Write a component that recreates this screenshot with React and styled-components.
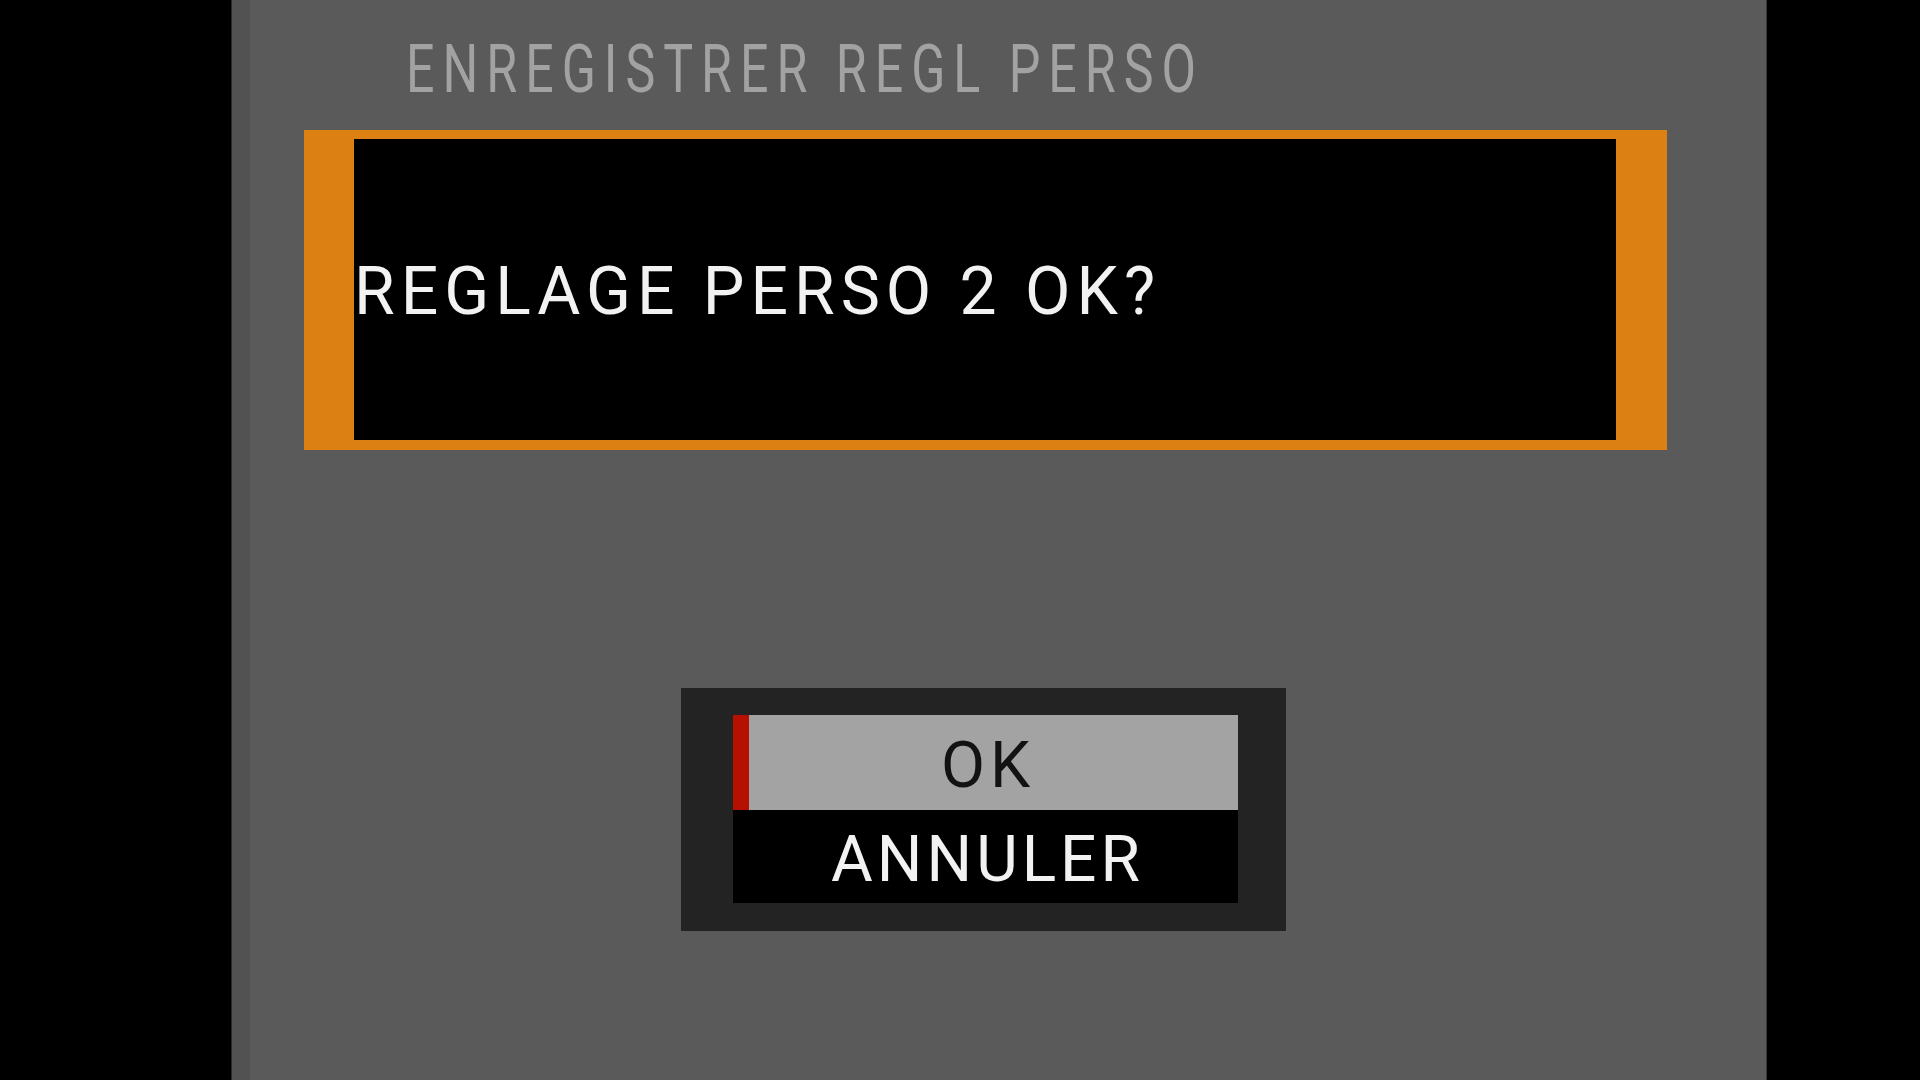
import React from "react";
import styled, { createGlobalStyle } from "styled-components";

const Global = createGlobalStyle`
  html, body { margin: 0; padding: 0; background: #000; }
  body { font-family: Roboto, "Liberation Sans", sans-serif; }
  #root { height: 100vh; }
`;

const Screen = styled.div`
  display: flex;
  width: 1920px;
  height: 1080px;
  background: #000;
  overflow: hidden;
`;

const Panel = styled.section`
  margin-left: 232px;
  width: 1516px;
  height: 100%;
  background: #5a5a5a;
  border-left: 18px solid #525252;
  display: flex;
  flex-direction: column;
  box-shadow: -1px 0 0 #2a2a2a, 1px 0 0 #3a3a3a;
`;

const Title = styled.h1`
  margin: 37px 0 0 156px;
  font-family: Roboto, "Liberation Sans", sans-serif;
  font-weight: 400;
  font-size: 66px;
  line-height: 66px;
  letter-spacing: 10.5px;
  color: #a2a2a2;
  white-space: nowrap;
  transform: scaleX(0.76);
  transform-origin: left center;
`;

const MessageFrame = styled.div`
  margin: 27px 0 0 54px;
  width: 1262px;
  height: 301px;
  border-style: solid;
  border-color: #dd8014;
  border-width: 9px 51px 10px 50px;
  background: #000;
  display: flex;
  align-items: center;
`;

const Message = styled.p`
  margin: 0;
  padding-top: 5px;
  font-size: 66px;
  line-height: 66px;
  letter-spacing: 6px;
  color: #f2f2f2;
  white-space: nowrap;
`;

const Menu = styled.div`
  margin: 238px 0 0 431px;
  width: 505px;
  padding: 27px 48px 28px 52px;
  background: #232323;
  display: flex;
  flex-direction: column;
`;

const Option = styled.div`
  position: relative;
  height: ${(p) => p.$h}px;
  box-sizing: border-box;
  padding-top: 7px;
  display: flex;
  align-items: center;
  justify-content: center;
  background: ${(p) => (p.$selected ? "#a3a3a3" : "#000")};
  color: ${(p) => (p.$selected ? "#121212" : "#f2f2f2")};
  font-size: 64px;
  line-height: 64px;
  letter-spacing: ${(p) => p.$spacing}px;
  padding-left: ${(p) => p.$spacing}px;
`;

const Cursor = styled.span`
  position: absolute;
  left: 0;
  top: 0;
  bottom: 0;
  width: 16px;
  background: #b51000;
`;

export default function App() {
  return (
    <>
      <Global />
      <Screen>
        <Panel>
          <Title>ENREGISTRER REGL PERSO</Title>
          <MessageFrame>
            <Message>REGLAGE PERSO 2 OK?</Message>
          </MessageFrame>
          <Menu>
            <Option $selected $h={95} $spacing={5}>
              <Cursor />
              OK
            </Option>
            <Option $h={93} $spacing={4}>
              ANNULER
            </Option>
          </Menu>
        </Panel>
      </Screen>
    </>
  );
}
